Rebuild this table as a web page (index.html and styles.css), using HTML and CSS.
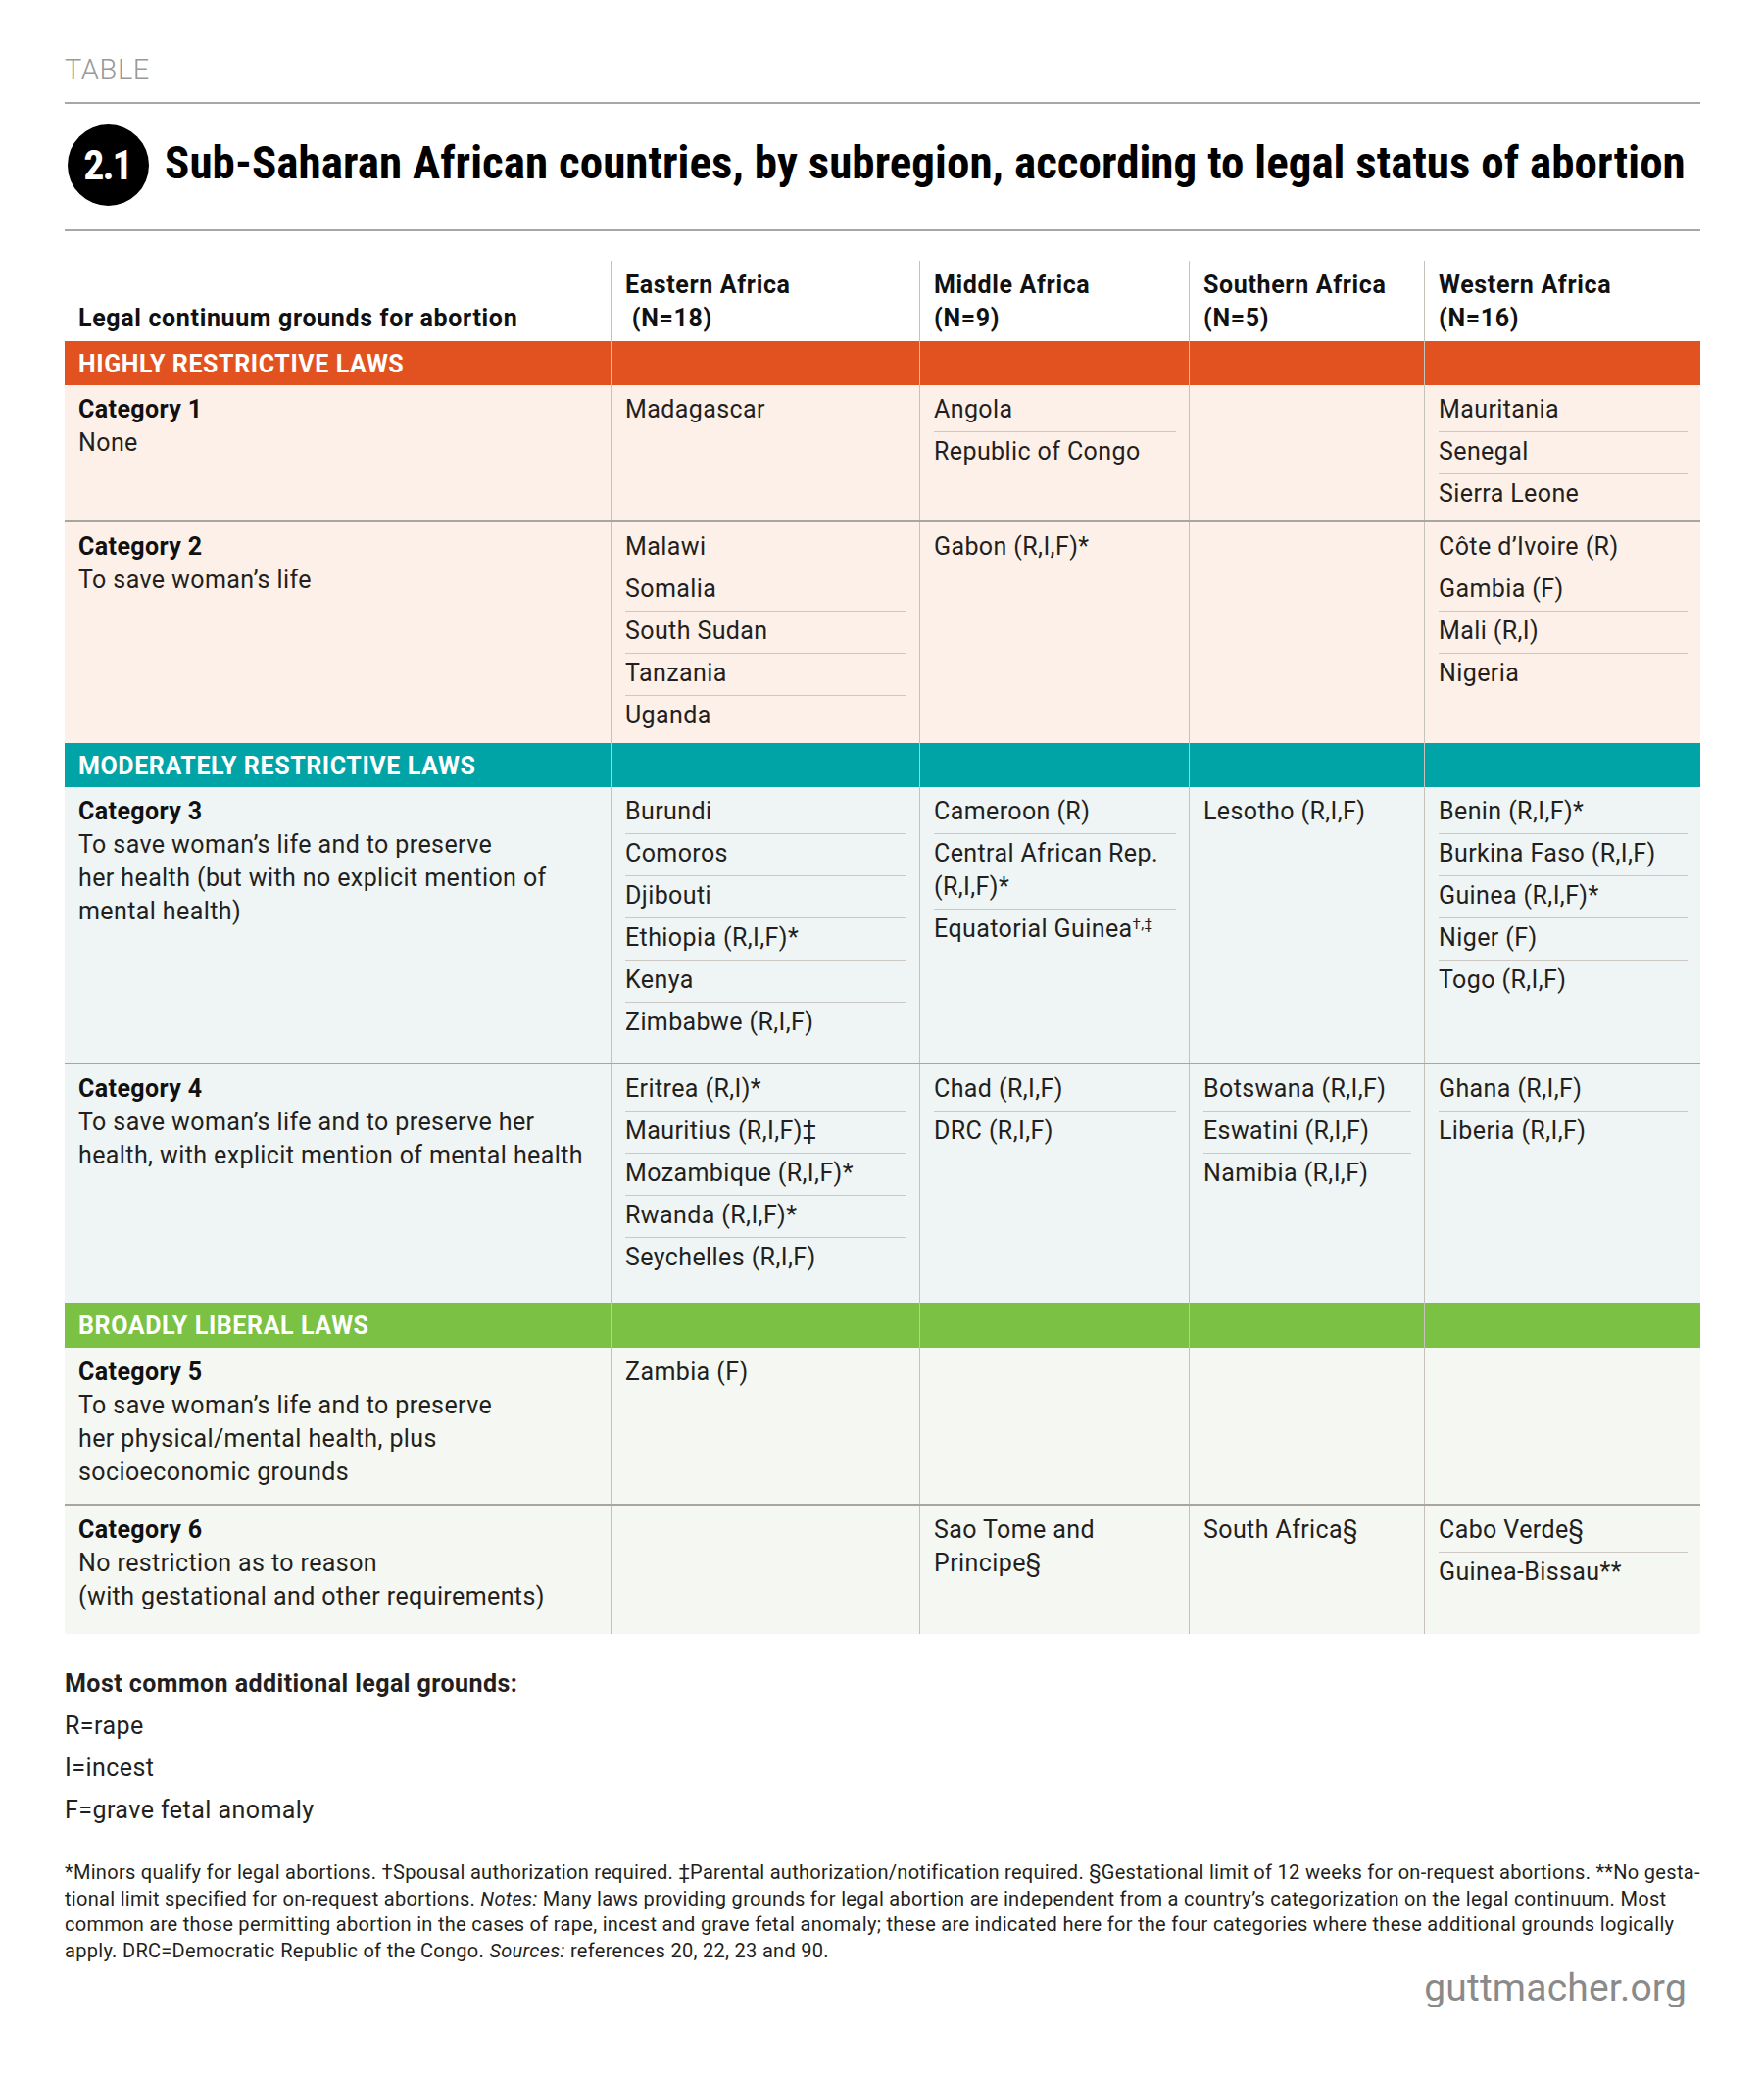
FILE: index.html
```html
<!DOCTYPE html>
<html lang="en">
<head>
<meta charset="utf-8">
<title>Table 2.1</title>
<link rel="stylesheet" href="styles.css">
</head>
<body>
<div class="page">
  <div class="kicker">TABLE</div>
  <div class="title-row">
    <div class="badge">2.1</div>
    <h1 class="title">Sub-Saharan African countries, by subregion, according to legal status of abortion</h1>
  </div>

  <div class="grid">
    <div class="row head">
      <div class="cell">Legal continuum grounds for abortion</div>
      <div class="cell">Eastern Africa<br>&nbsp;(N=18)</div>
      <div class="cell">Middle Africa<br>(N=9)</div>
      <div class="cell">Southern Africa<br>(N=5)</div>
      <div class="cell">Western Africa<br>(N=16)</div>
    </div>

    <div class="row band orange">
      <div class="cell">HIGHLY RESTRICTIVE LAWS</div>
      <div class="cell"></div><div class="cell"></div><div class="cell"></div><div class="cell"></div>
    </div>
    <div class="row cat tint-orange h-c1 sep">
      <div class="cell"><b>Category 1</b><br>None</div>
      <div class="cell"><ul><li>Madagascar</li></ul></div>
      <div class="cell"><ul><li>Angola</li><li>Republic of Congo</li></ul></div>
      <div class="cell"></div>
      <div class="cell"><ul><li>Mauritania</li><li>Senegal</li><li>Sierra Leone</li></ul></div>
    </div>
    <div class="row cat tint-orange h-c2">
      <div class="cell"><b>Category 2</b><br>To save woman’s life</div>
      <div class="cell"><ul><li>Malawi</li><li>Somalia</li><li>South Sudan</li><li>Tanzania</li><li>Uganda</li></ul></div>
      <div class="cell"><ul><li>Gabon (R,I,F)*</li></ul></div>
      <div class="cell"></div>
      <div class="cell"><ul><li>Côte d’Ivoire (R)</li><li>Gambia (F)</li><li>Mali (R,I)</li><li>Nigeria</li></ul></div>
    </div>

    <div class="row band teal">
      <div class="cell">MODERATELY RESTRICTIVE LAWS</div>
      <div class="cell"></div><div class="cell"></div><div class="cell"></div><div class="cell"></div>
    </div>
    <div class="row cat tint-teal h-c3 sep">
      <div class="cell"><b>Category 3</b><br>To save woman’s life and to preserve<br>her health (but with no explicit mention of<br>mental health)</div>
      <div class="cell"><ul><li>Burundi</li><li>Comoros</li><li>Djibouti</li><li>Ethiopia (R,I,F)*</li><li>Kenya</li><li>Zimbabwe (R,I,F)</li></ul></div>
      <div class="cell"><ul><li>Cameroon (R)</li><li>Central African Rep.<br>(R,I,F)*</li><li>Equatorial Guinea<sup>†,‡</sup></li></ul></div>
      <div class="cell"><ul><li>Lesotho (R,I,F)</li></ul></div>
      <div class="cell"><ul><li>Benin (R,I,F)*</li><li>Burkina Faso (R,I,F)</li><li>Guinea (R,I,F)*</li><li>Niger (F)</li><li>Togo (R,I,F)</li></ul></div>
    </div>
    <div class="row cat tint-teal h-c4">
      <div class="cell"><b>Category 4</b><br>To save woman’s life and to preserve her<br>health, with explicit mention of mental health</div>
      <div class="cell"><ul><li>Eritrea (R,I)*</li><li>Mauritius (R,I,F)‡</li><li>Mozambique (R,I,F)*</li><li>Rwanda (R,I,F)*</li><li>Seychelles (R,I,F)</li></ul></div>
      <div class="cell"><ul><li>Chad (R,I,F)</li><li>DRC (R,I,F)</li></ul></div>
      <div class="cell"><ul><li>Botswana (R,I,F)</li><li>Eswatini (R,I,F)</li><li>Namibia (R,I,F)</li></ul></div>
      <div class="cell"><ul><li>Ghana (R,I,F)</li><li>Liberia (R,I,F)</li></ul></div>
    </div>

    <div class="row band green">
      <div class="cell">BROADLY LIBERAL LAWS</div>
      <div class="cell"></div><div class="cell"></div><div class="cell"></div><div class="cell"></div>
    </div>
    <div class="row cat tint-green h-c5 sep">
      <div class="cell"><b>Category 5</b><br>To save woman’s life and to preserve<br>her physical/mental health, plus<br>socioeconomic grounds</div>
      <div class="cell"><ul><li>Zambia (F)</li></ul></div>
      <div class="cell"></div>
      <div class="cell"></div>
      <div class="cell"></div>
    </div>
    <div class="row cat tint-green h-c6">
      <div class="cell"><b>Category 6</b><br>No restriction as to reason<br>(with gestational and other requirements)</div>
      <div class="cell"></div>
      <div class="cell"><ul><li>Sao Tome and<br>Principe§</li></ul></div>
      <div class="cell"><ul><li>South Africa§</li></ul></div>
      <div class="cell"><ul><li>Cabo Verde§</li><li>Guinea-Bissau**</li></ul></div>
    </div>
  </div>

  <div class="legend">
    <b>Most common additional legal grounds:</b><br>
    R=rape<br>
    I=incest<br>
    F=grave fetal anomaly
  </div>

  <p class="notes">*Minors qualify for legal abortions. †Spousal authorization required. ‡Parental authorization/notification required. §Gestational limit of 12 weeks for on-request abortions. **No gesta-<br>tional limit specified for on-request abortions. <i>Notes:</i> Many laws providing grounds for legal abortion are independent from a country’s categorization on the legal continuum. Most<br>common are those permitting abortion in the cases of rape, incest and grave fetal anomaly; these are indicated here for the four categories where these additional grounds logically<br>apply. DRC=Democratic Republic of the Congo. <i>Sources:</i> references 20, 22, 23 and 90.</p>

  <div class="brand">guttmacher.org</div>
</div>
</body>
</html>
```

FILE: styles.css
```css
* { box-sizing: border-box; }

html, body {
  margin: 0;
  padding: 0;
  background: #ffffff;
}

body {
  font-family: Roboto, "Liberation Sans", Arial, sans-serif;
  color: #231f20;
  font-size: 25px;
  line-height: 34px;
  letter-spacing: 0.4px;
}

.page {
  width: 1800px;
  padding: 54px 65px 0 66px;
}

.kicker {
  font-size: 29px;
  line-height: 34px;
  font-weight: 300;
  letter-spacing: 0.6px;
  color: #999999;
  padding-bottom: 16px;
  border-bottom: 2px solid #a7a7a7;
}

.title-row {
  display: flex;
  align-items: center;
  gap: 16px;
  padding: 21px 0 24px 3px;
  border-bottom: 2px solid #a7a7a7;
}

.badge {
  flex: none;
  width: 83px;
  height: 83px;
  border-radius: 50%;
  background: #000000;
  color: #ffffff;
  font-weight: 700;
  font-size: 42px;
  font-stretch: 80%;
  letter-spacing: -2px;
  display: flex;
  align-items: center;
  justify-content: center;
  padding-right: 2px;
}

.title {
  margin: 0 0 6px 0;
  font-size: 47px;
  line-height: 54px;
  font-weight: 700;
  font-stretch: 78%;
  letter-spacing: 0.05px;
  color: #000000;
  white-space: nowrap;
}

.grid {
  margin-top: 30px;
  width: 1669px;
}

.row {
  display: grid;
  grid-template-columns: 557px 315px 275px 240px 282px;
}

.cell {
  padding: 8px 13px 0 14px;
}

.cell + .cell {
  border-left: 1px solid #c7c1bc;
}

.head {
  height: 82px;
  font-size: 25px;
  font-weight: 700;
  letter-spacing: 0.65px;
}

.head .cell {
  display: flex;
  align-items: flex-end;
  padding-bottom: 7px;
  color: #111111;
}

.band {
  height: 45px;
  color: #ffffff;
  font-weight: 700;
  letter-spacing: 0.6px;
}

.band .cell {
  padding-top: 7px;
  white-space: nowrap;
}

.band.green { height: 46px; }

.orange { background: #e25220; }
.teal { background: #00a3a6; }
.green { background: #7bc143; }

.tint-orange { background: #fdf0e8; }
.tint-teal { background: #eff5f5; }
.tint-green { background: #f5f8f2; }

.sep { border-bottom: 2px solid #a9a5a1; }

.h-c1 { height: 140px; }
.h-c2 { height: 225px; }
.h-c3 { height: 283px; }
.h-c4 { height: 243px; }
.h-c5 { height: 161px; }
.h-c6 { height: 131px; }

.cat b { font-weight: 700; color: #111111; }

ul {
  list-style: none;
  margin: 0;
  padding: 0;
}

li {
  padding: 3px 0 5px;
  border-bottom: 1px solid #cdc8c4;
}

li:first-child { padding-top: 0; }
li:last-child { border-bottom: 0; }

sup {
  font-size: 15px;
  line-height: 0;
  vertical-align: 8px;
}

.legend {
  margin-top: 29px;
  line-height: 43px;
  letter-spacing: 0.45px;
}

.legend b { font-weight: 700; }

.notes {
  margin: 29px 0 0 0;
  font-size: 20px;
  line-height: 26.7px;
  letter-spacing: 0.3px;
  white-space: nowrap;
}

.brand {
  margin-top: 4px;
  width: 1669px;
  padding-right: 14px;
  text-align: right;
  font-size: 39px;
  line-height: 40px;
  letter-spacing: 0.2px;
  color: #8a8a8a;
}
```
